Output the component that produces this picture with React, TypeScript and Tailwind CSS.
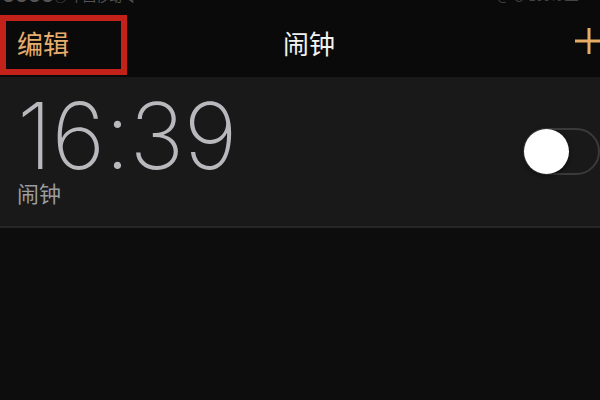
import React from "react";

export default function App() {
  return (
    <div className="w-[600px] h-[400px] bg-[#0d0d0d] flex flex-col overflow-hidden" style={{ fontFamily: '"Noto Sans CJK SC", "Noto Sans", sans-serif' }}>
      {/* header */}
      <div className="relative h-[77px] bg-[#0a0a0a] flex flex-col shrink-0">
        <div className="h-[4px] overflow-hidden flex justify-between px-[2px]">
          <span className="text-[13px] leading-[13px] -mt-[11px] text-[#555]">●●●●○ 中国移动 令</span>
          <span className="text-[13px] leading-[13px] -mt-[11px] text-[#444] mr-[20px]">@ ⊙ 100% ▬</span>
        </div>
        <div className="flex items-center h-[50px] mt-[14px]">
          <div className="w-[283px] pl-[17px] text-[26px] leading-none text-[#e6ad6c]">编辑</div>
          <div className="text-[26px] leading-none text-[#f2f2f2]">闹钟</div>
          <div className="flex-1" />
          <svg width="28" height="26" viewBox="0 0 28 26" className="-mr-[3px] -mt-[4px]">
            <path d="M0 13H28M14 0V26" stroke="#e8ac66" strokeWidth="3" />
          </svg>
        </div>
        {/* red annotation box */}
        <div className="absolute left-0 top-[15px] w-[127px] h-[60px] border-[6px] border-[#c3221b]" />
      </div>
      {/* alarm row */}
      <div className="h-[151px] bg-[#19191a] border-b-2 border-[#262627] flex items-start shrink-0">
        <div className="flex flex-col pl-[17px] pt-[15px] flex-1">
          <div className="text-[92px] leading-[88px] text-[#b9b9bd] tracking-[-0.5px]" style={{ fontFamily: 'Inter, "Noto Sans", sans-serif', fontWeight: 200 }}>16:39</div>
          <div className="text-[22px] leading-none text-[#9c9c9e] mt-[1px]">闹钟</div>
        </div>
        <div className="self-center w-[77px] h-[47px] rounded-full border-2 border-[#3a3a3b] relative shrink-0">
          <div className="absolute -left-[1px] -top-[1px] w-[45px] h-[45px] rounded-full bg-white shadow-[0_2px_4px_rgba(0,0,0,0.5)]" />
        </div>
      </div>
      <div className="flex-1 bg-[#0d0d0d]" />
    </div>
  );
}
